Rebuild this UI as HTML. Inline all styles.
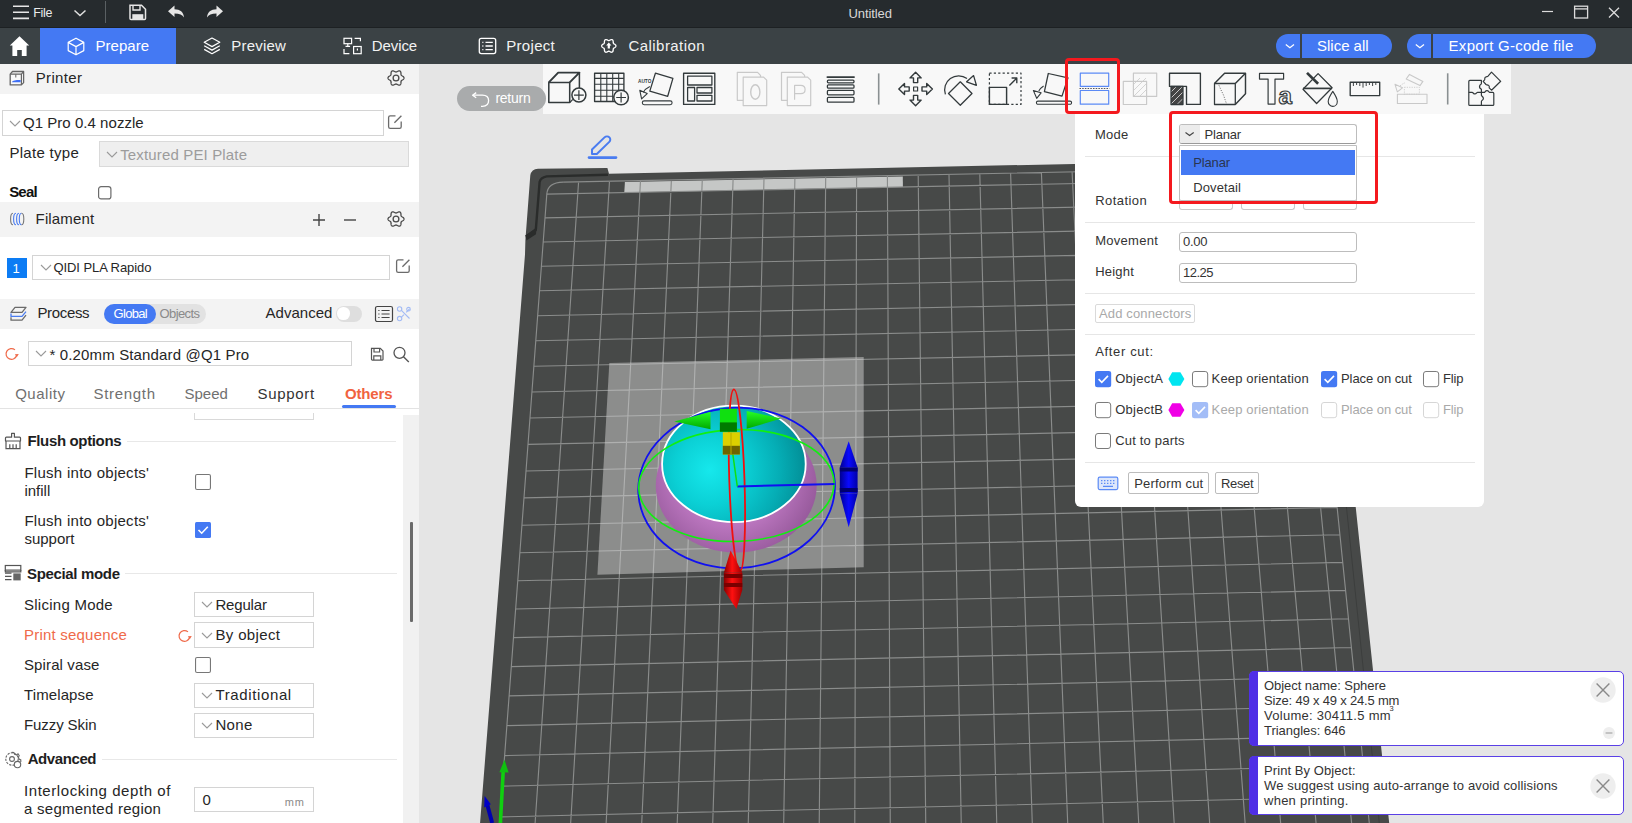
<!DOCTYPE html><html><head><meta charset="utf-8"><style>
html,body{margin:0;padding:0;width:1632px;height:823px;overflow:hidden;background:#e5e5e5;font-family:"Liberation Sans", sans-serif;}
.a{position:absolute;box-sizing:border-box;}
.t{white-space:pre;}
svg.a{overflow:visible;}
</style></head><body>
<svg class="a" style="left:0;top:0" width="1632" height="823" viewBox="0 0 1632 823"><rect x="419" y="64" width="1213" height="759" fill="#e5e5e5"/>
<path d="M474.3,896.1L525.0,254.4L525.4 240L530.3,175.3Q531.5 168.9 538.0,168.7L607.4 167.9L609 173.7L1318.8,158.8L1394.6,874.0Z" fill="#474948"/>
<path d="M608 174.8L546.7 176.4Q540.5 177.5 539.6 182L535.8 230L526 236.5" fill="none" stroke="#2a2c2b" stroke-width="2.4" stroke-linejoin="round"/>
<path d="M525.4 235.6L536.5 227.6L536 234.2L526.5 240.6Z" fill="#2a2c2b"/>
<polygon points="624.9,182.0 902.8,176.5 902.9,187.0 624.3,192.6" fill="#c5c7c6"/>
<path d="M546.8,194.1L496.5,863.8M578.6,181.7L532.4,863.0M609.5,181.1L568.3,862.1M640.5,180.5L604.1,861.3M671.4,179.9L640.0,860.4M702.3,179.3L675.8,859.6M733.1,178.7L711.6,858.7M764.0,178.0L747.4,857.9M794.9,177.4L783.1,857.0M825.7,176.8L818.9,856.2M856.6,176.2L854.7,855.3M887.4,175.6L890.4,854.4M918.2,175.0L926.1,853.6M949.0,174.4L961.8,852.7M979.8,173.7L997.5,851.9M1010.6,173.1L1033.2,851.1M1041.4,172.5L1068.8,850.2M1072.1,171.9L1104.5,849.4M1102.9,171.3L1140.1,848.5M1133.6,170.7L1175.7,847.7M1164.3,170.1L1211.3,846.8M1195.1,169.5L1246.9,846.0M1225.8,168.8L1282.5,845.1M1256.5,168.2L1318.0,844.3M1287.2,167.6L1353.6,843.4M1303.7,179.0L1371.3,843.0M546.8,194.1L1303.7,179.0M545.0,217.9L1306.1,202.6M543.2,242.0L1308.5,226.4M541.4,266.3L1311.0,250.6M539.5,290.8L1313.5,274.9M537.7,315.7L1316.0,299.6M535.8,340.8L1318.5,324.5M533.9,366.3L1321.1,349.8M531.9,392.0L1323.7,375.3M530.0,418.0L1326.3,401.1M528.0,444.4L1329.0,427.2M526.0,471.0L1331.7,453.6M524.0,497.9L1334.4,480.3M521.9,525.2L1337.2,507.4M519.9,552.8L1339.9,534.7M517.8,580.7L1342.8,562.4M515.7,609.0L1345.6,590.4M513.5,637.6L1348.5,618.8M511.3,666.6L1351.4,647.5M509.1,695.9L1354.4,676.6M506.9,725.6L1357.4,706.0M504.7,755.6L1360.4,735.8M502.4,786.1L1363.5,765.9M500.1,816.9L1366.6,796.5M497.7,848.1L1369.8,827.4M563.1,182.1L1302.5,167.3" stroke="#8a8c8b" stroke-width="1.15" fill="none"/>
<path d="M546.8,194.1Q547.7,182.4 563.1,182.1" stroke="#8a8c8b" stroke-width="1.15" fill="none"/>
<polygon points="609.3,363.1 863.7,357.0 863.7,567.2 597.4,574.7" fill="#d8d8d8" fill-opacity="0.48"/>
<path d="M1310.9,164.8L1384.6,874.3" stroke="#3c3e3d" stroke-width="1" fill="none"/>
<defs>
<radialGradient id="gc" cx="710" cy="470" r="100" gradientUnits="userSpaceOnUse">
<stop offset="0" stop-color="#16e8ec"/><stop offset="0.35" stop-color="#0bd0d5"/><stop offset="0.7" stop-color="#05adb5"/><stop offset="1" stop-color="#028a92"/></radialGradient>
<radialGradient id="gp" cx="730" cy="470" r="100" gradientUnits="userSpaceOnUse">
<stop offset="0.55" stop-color="#bb76bf"/><stop offset="1" stop-color="#8e5393"/></radialGradient>
<linearGradient id="gr" x1="0" y1="0" x2="1" y2="0"><stop offset="0" stop-color="#8a0000"/><stop offset="0.45" stop-color="#ff1010"/><stop offset="1" stop-color="#a00000"/></linearGradient>
<linearGradient id="gb" x1="0" y1="0" x2="1" y2="0"><stop offset="0" stop-color="#000090"/><stop offset="0.5" stop-color="#0a0aff"/><stop offset="1" stop-color="#0000a8"/></linearGradient>
<linearGradient id="gg" x1="0" y1="0" x2="0" y2="1"><stop offset="0" stop-color="#26ff26"/><stop offset="1" stop-color="#00a800"/></linearGradient>
</defs>
<ellipse cx="736.2" cy="485.5" rx="80.5" ry="67" fill="url(#gp)"/>
<ellipse cx="733.9" cy="463.9" rx="71.8" ry="58.2" fill="url(#gc)" stroke="#ffffff" stroke-width="1.8"/>
<ellipse cx="736.6" cy="487.9" rx="98.4" ry="80.2" transform="rotate(-3.5 736.6 487.9)" fill="none" stroke="#1010f0" stroke-width="1.8"/>
<ellipse cx="736.4" cy="485.5" rx="97.7" ry="55.9" transform="rotate(-1.8 736.4 485.5)" fill="none" stroke="#10f010" stroke-width="1.6"/>
<ellipse cx="736.9" cy="480.3" rx="7.6" ry="91" transform="rotate(-1.9 736.9 480.3)" fill="none" stroke="#f01010" stroke-width="1.8"/>
<path d="M737.3 486.4L834.5 484" stroke="#1010f0" stroke-width="2"/>
<path d="M737.3 486.4L732.5 452" stroke="#10e010" stroke-width="1.5"/>
<path d="M674.2 421.5L710.5 411.7L710.5 429.2Z" fill="url(#gg)"/>
<path d="M781.2 418.5L746.7 411L746.7 428.8Z" fill="url(#gg)"/>
<rect x="719.9" y="408.8" width="17" height="22.9" fill="#10e010"/><rect x="719.9" y="422.4" width="17" height="9.3" fill="#007a00"/>
<rect x="722.8" y="432.2" width="17.1" height="22.3" fill="#ddd000"/><rect x="722.8" y="445.8" width="17.1" height="8.7" fill="#6e6400"/><path d="M731 432.5V454.4" stroke="#b8aa00" stroke-width="1"/>
<path d="M848.7 441.2L857.6 467.5H839.8Z" fill="url(#gb)"/><rect x="839.8" y="467.5" width="17.8" height="26.2" fill="url(#gb)"/><path d="M839.8 493.7H857.6L848.7 527.3Z" fill="url(#gb)"/><rect x="839.8" y="467.5" width="17.8" height="4" fill="#000070"/><rect x="839.8" y="488" width="17.8" height="4" fill="#000070"/>
<path d="M730.6 550.6L742.3 572.5H723.9Z" fill="url(#gr)"/><rect x="723.9" y="572.5" width="18.4" height="17.5" fill="url(#gr)"/><path d="M723.9 590H742.3L736.4 609Z" fill="url(#gr)"/><rect x="723.9" y="574" width="18.4" height="4" fill="#7a0000"/><rect x="723.9" y="583" width="18.4" height="4" fill="#7a0000"/>
<path d="M503.2 771L500.4 823" stroke="#10d010" stroke-width="3.6"/><path d="M504.5 759.7L508.6 772.6L499.4 772.2Z" fill="#10c010"/>
<path d="M486.8 803L492.2 823" stroke="#0000b0" stroke-width="4"/><path d="M484.6 796L490.8 804.2L484.2 807.6Z" fill="#0000c8"/></svg>
<div class="a" style="left:0.00px;top:0.00px;width:1632.00px;height:27.00px;background:#262b2e"></div>
<div class="a" style="left:0.00px;top:27.00px;width:1632.00px;height:1.00px;background:#1d2123"></div>
<svg class="a" style="left:0px;top:0px;" width="40" height="27" viewBox="0 0 40 27"><path d="M13 6.2H29M13 12.3H29M13 18.4H29" stroke="#e6e6e6" stroke-width="1.6"/></svg>
<div class="a t" style="left:33.20px;top:3.67px;font-size:12.5px;line-height:18px;color:#ececec;font-weight:400;letter-spacing:-0.319px;">File</div>
<svg class="a" style="left:70px;top:0px;" width="20" height="27" viewBox="0 0 20 27"><path d="M4.5 10.5L10 15.5L15.5 10.5" stroke="#e0e0e0" stroke-width="1.5" fill="none"/></svg>
<div class="a" style="left:105.00px;top:1.00px;width:1.20px;height:22.00px;background:#5a6063"></div>
<svg class="a" style="left:125px;top:0px;" width="25" height="27" viewBox="0 0 25 27"><path d="M5 5.2H16.5L20.5 9.2V18.6a1 1 0 0 1-1 1H6a1 1 0 0 1-1-1Z" stroke="#e6e6e6" stroke-width="1.5" fill="none"/><path d="M8 5.5V10H15V5.5" stroke="#e6e6e6" stroke-width="1.4" fill="none"/><rect x="7.3" y="14.2" width="11" height="4.8" fill="#e6e6e6"/></svg>
<svg class="a" style="left:165px;top:0px;" width="24" height="27" viewBox="0 0 24 27"><path d="M3 11.3L9.5 5.6V9.2C15 9.2 18.7 12 19 17.6C17.5 14.8 14.5 13.4 9.5 13.4V17Z" fill="#e6e6e6"/></svg>
<svg class="a" style="left:203px;top:0px;" width="24" height="27" viewBox="0 0 24 27"><path d="M20 11.3L13.5 5.6V9.2C8 9.2 4.3 12 4 17.6C5.5 14.8 8.5 13.4 13.5 13.4V17Z" fill="#e6e6e6"/></svg>
<div class="a t" style="left:848.50px;top:4.50px;font-size:13px;line-height:18px;color:#d8d8d8;font-weight:400;letter-spacing:-0.085px;">Untitled</div>
<svg class="a" style="left:1530px;top:0px;" width="102" height="27" viewBox="0 0 102 27"><path d="M12 11.5H23" stroke="#dcdcdc" stroke-width="1.2"/><rect x="44.6" y="6.2" width="13" height="11.8" stroke="#dcdcdc" stroke-width="1.3" fill="none"/><path d="M44.6 8.9H57.6" stroke="#dcdcdc" stroke-width="1.3"/><path d="M79 7.8L89 17.5M89 7.8L79 17.5" stroke="#dcdcdc" stroke-width="1.3"/></svg>
<div class="a" style="left:0.00px;top:28.00px;width:1632.00px;height:36.00px;background:#3b4245"></div>
<div class="a" style="left:40.00px;top:28.00px;width:136.00px;height:36.00px;background:#4479f3"></div>
<svg class="a" style="left:0px;top:28px;" width="40" height="36" viewBox="0 0 40 36"><path d="M19.5 8.2L29.2 17.6H26.6V28H21.8V22H17.2V28H12.4V17.6H9.8Z" fill="#ffffff"/></svg>
<svg class="a" style="left:60px;top:28px;" width="30" height="36" viewBox="0 0 30 36"><path d="M16 10.2L23.8 14.4V22.6L16 26.8L8.2 22.6V14.4Z M8.2 14.4L16 18.6L23.8 14.4M16 18.6V26.6" stroke="#fff" stroke-width="1.2" fill="none" stroke-linejoin="round"/></svg>
<div class="a t" style="left:95.60px;top:35.30px;font-size:15px;line-height:21px;color:#ffffff;font-weight:400;letter-spacing:0.004px;">Prepare</div>
<svg class="a" style="left:200px;top:28px;" width="24" height="36" viewBox="0 0 24 36"><path d="M12 10L19.8 14.3L12 18.6L4.2 14.3Z" stroke="#fff" stroke-width="1.2" fill="none" stroke-linejoin="round"/><path d="M4.2 17.8L12 22.1L19.8 17.8M4.2 21.4L12 25.7L19.8 21.4" stroke="#fff" stroke-width="1.2" fill="none" stroke-linejoin="round"/></svg>
<div class="a t" style="left:231.30px;top:35.30px;font-size:15px;line-height:21px;color:#f2f2f2;font-weight:400;letter-spacing:0.193px;">Preview</div>
<svg class="a" style="left:340px;top:28px;" width="24" height="36" viewBox="0 0 24 36"><rect x="4" y="10.3" width="7.6" height="5.4" stroke="#fff" stroke-width="1.2" fill="none"/><path d="M7.8 15.7V18.3M5.5 18.3H10.1" stroke="#fff" stroke-width="1.2"/><path d="M14.6 10.3H20.4V13.2M4 21V25.6H9.4" stroke="#fff" stroke-width="1.2" fill="none"/><rect x="13.6" y="18.5" width="7.6" height="7.2" stroke="#fff" stroke-width="1.2" fill="none"/><path d="M17.4 20.6V22.6" stroke="#fff" stroke-width="1.2"/></svg>
<div class="a t" style="left:371.80px;top:35.30px;font-size:15px;line-height:21px;color:#f2f2f2;font-weight:400;letter-spacing:-0.089px;">Device</div>
<svg class="a" style="left:475px;top:28px;" width="24" height="36" viewBox="0 0 24 36"><rect x="4.3" y="10.4" width="16.4" height="15.2" rx="2" stroke="#fff" stroke-width="1.3" fill="none"/><path d="M7.3 14.4H8.4M10.5 14.4H17.8M7.3 18H8.4M10.5 18H17.8M7.3 21.6H8.4M10.5 21.6H17.8" stroke="#fff" stroke-width="1.3"/></svg>
<div class="a t" style="left:506.20px;top:35.30px;font-size:15px;line-height:21px;color:#f2f2f2;font-weight:400;letter-spacing:0.319px;">Project</div>
<svg class="a" style="left:600px;top:28px;" width="20" height="36" viewBox="0 0 20 36"><path d="M15.90 17.90 L15.85 18.27 L15.69 18.62 L15.45 18.95 L15.14 19.25 L14.79 19.50 L14.43 19.73 L14.09 19.93 L13.80 20.13 L13.56 20.33 L13.39 20.55 L13.28 20.81 L13.23 21.12 L13.21 21.47 L13.20 21.86 L13.18 22.28 L13.13 22.71 L13.03 23.13 L12.87 23.50 L12.64 23.82 L12.35 24.05 L12.00 24.19 L11.62 24.23 L11.21 24.18 L10.80 24.06 L10.40 23.89 L10.03 23.69 L9.69 23.50 L9.37 23.34 L9.08 23.24 L8.80 23.20 L8.52 23.24 L8.23 23.34 L7.91 23.50 L7.57 23.69 L7.20 23.89 L6.80 24.06 L6.39 24.18 L5.98 24.23 L5.60 24.19 L5.25 24.05 L4.96 23.82 L4.73 23.50 L4.57 23.13 L4.47 22.71 L4.42 22.28 L4.40 21.86 L4.39 21.47 L4.37 21.12 L4.32 20.81 L4.21 20.55 L4.04 20.33 L3.80 20.13 L3.51 19.93 L3.17 19.73 L2.81 19.50 L2.46 19.25 L2.15 18.95 L1.91 18.62 L1.75 18.27 L1.70 17.90 L1.75 17.53 L1.91 17.18 L2.15 16.85 L2.46 16.55 L2.81 16.30 L3.17 16.07 L3.51 15.87 L3.80 15.67 L4.04 15.47 L4.21 15.25 L4.32 14.99 L4.37 14.68 L4.39 14.33 L4.40 13.94 L4.42 13.52 L4.47 13.09 L4.57 12.67 L4.73 12.30 L4.96 11.98 L5.25 11.75 L5.60 11.61 L5.98 11.57 L6.39 11.62 L6.80 11.74 L7.20 11.91 L7.57 12.11 L7.91 12.30 L8.23 12.46 L8.52 12.56 L8.80 12.60 L9.08 12.56 L9.37 12.46 L9.69 12.30 L10.03 12.11 L10.40 11.91 L10.80 11.74 L11.21 11.62 L11.62 11.57 L12.00 11.61 L12.35 11.75 L12.64 11.98 L12.87 12.30 L13.03 12.67 L13.13 13.09 L13.18 13.52 L13.20 13.94 L13.21 14.33 L13.23 14.68 L13.28 14.99 L13.39 15.25 L13.56 15.47 L13.80 15.67 L14.09 15.87 L14.43 16.07 L14.79 16.30 L15.14 16.55 L15.45 16.85 L15.69 17.18 L15.85 17.53 L15.90 17.90Z" stroke="#fff" stroke-width="1.3" fill="none"/><path d="M8.8 14.4L11.4 17.4H9.9V20.6H7.7V17.4H6.2Z" fill="#fff"/></svg>
<div class="a t" style="left:628.60px;top:35.30px;font-size:15px;line-height:21px;color:#f2f2f2;font-weight:400;letter-spacing:0.420px;">Calibration</div>
<div class="a" style="left:1276.00px;top:34.00px;width:116.00px;height:24.00px;background:#4479f3;border-radius:12px"></div>
<div class="a" style="left:1300.00px;top:34.00px;width:2.00px;height:24.00px;background:#3b4245"></div>
<svg class="a" style="left:1280px;top:34px;" width="20" height="24" viewBox="0 0 20 24"><path d="M5.8 10.6L9.9 13.8L14 10.6" stroke="#fff" stroke-width="1.3" fill="none"/></svg>
<div class="a t" style="left:1317.10px;top:35.30px;font-size:15px;line-height:21px;color:#ffffff;font-weight:400;letter-spacing:-0.034px;">Slice all</div>
<div class="a" style="left:1407.00px;top:34.00px;width:189.00px;height:24.00px;background:#4479f3;border-radius:12px"></div>
<div class="a" style="left:1430.80px;top:34.00px;width:2.00px;height:24.00px;background:#3b4245"></div>
<svg class="a" style="left:1410px;top:34px;" width="20" height="24" viewBox="0 0 20 24"><path d="M5.8 10.6L9.9 13.8L14 10.6" stroke="#fff" stroke-width="1.3" fill="none"/></svg>
<div class="a t" style="left:1448.60px;top:35.30px;font-size:15px;line-height:21px;color:#ffffff;font-weight:400;letter-spacing:0.272px;">Export G-code file</div>
<div class="a" style="left:0.00px;top:64.00px;width:419.00px;height:759.00px;background:#ffffff"></div>
<div class="a" style="left:0.00px;top:64.00px;width:419.00px;height:30.00px;background:#f3f3f3"></div>
<svg class="a" style="left:8px;top:69px;" width="18" height="18" viewBox="0 0 18 18"><path d="M2.2 5.2L4.5 2.5H15.6V13.6L13.4 15.9H2.2Z" stroke="#666" stroke-width="1.3" fill="#fafafa" stroke-linejoin="round"/><path d="M2.2 5.2H13.4V15.9M13.4 5.2L15.6 2.5" stroke="#666" stroke-width="1.2" fill="none"/><path d="M7.8 5.3V8.5" stroke="#666" stroke-width="1"/><path d="M3.8 13.2C5 11.4 7 11 12.6 11V13.2Z" fill="#3f6ff5"/></svg>
<div class="a t" style="left:35.70px;top:67.30px;font-size:15px;line-height:21px;color:#262626;font-weight:400;letter-spacing:0.352px;">Printer</div>
<svg class="a" style="left:388px;top:70px;" width="16" height="16" viewBox="0 0 16 16"><path d="M16.00 8.00 L15.94 8.42 L15.77 8.82 L15.49 9.19 L15.15 9.52 L14.76 9.81 L14.36 10.07 L13.99 10.30 L13.66 10.52 L13.39 10.75 L13.20 11.00 L13.07 11.29 L13.01 11.64 L12.98 12.04 L12.97 12.48 L12.95 12.95 L12.89 13.43 L12.78 13.90 L12.59 14.32 L12.33 14.67 L12.00 14.93 L11.61 15.08 L11.18 15.13 L10.72 15.08 L10.26 14.95 L9.81 14.76 L9.39 14.54 L9.00 14.33 L8.65 14.16 L8.32 14.04 L8.00 14.00 L7.68 14.04 L7.35 14.16 L7.00 14.33 L6.61 14.54 L6.19 14.76 L5.74 14.95 L5.28 15.08 L4.82 15.13 L4.39 15.08 L4.00 14.93 L3.67 14.67 L3.41 14.32 L3.22 13.90 L3.11 13.43 L3.05 12.95 L3.03 12.48 L3.02 12.04 L2.99 11.64 L2.93 11.29 L2.80 11.00 L2.61 10.75 L2.34 10.52 L2.01 10.30 L1.64 10.07 L1.24 9.81 L0.85 9.52 L0.51 9.19 L0.23 8.82 L0.06 8.42 L0.00 8.00 L0.06 7.58 L0.23 7.18 L0.51 6.81 L0.85 6.48 L1.24 6.19 L1.64 5.93 L2.01 5.70 L2.34 5.48 L2.61 5.25 L2.80 5.00 L2.93 4.71 L2.99 4.36 L3.02 3.96 L3.03 3.52 L3.05 3.05 L3.11 2.57 L3.22 2.10 L3.41 1.68 L3.67 1.33 L4.00 1.07 L4.39 0.92 L4.82 0.87 L5.28 0.92 L5.74 1.05 L6.19 1.24 L6.61 1.46 L7.00 1.67 L7.35 1.84 L7.68 1.96 L8.00 2.00 L8.32 1.96 L8.65 1.84 L9.00 1.67 L9.39 1.46 L9.81 1.24 L10.26 1.05 L10.72 0.92 L11.18 0.87 L11.61 0.92 L12.00 1.07 L12.33 1.33 L12.59 1.68 L12.78 2.10 L12.89 2.57 L12.95 3.05 L12.97 3.52 L12.98 3.96 L13.01 4.36 L13.07 4.71 L13.20 5.00 L13.39 5.25 L13.66 5.48 L13.99 5.70 L14.36 5.93 L14.76 6.19 L15.15 6.48 L15.49 6.81 L15.77 7.18 L15.94 7.58 L16.00 8.00Z" stroke="#4a4a4a" stroke-width="1.3" fill="none" stroke-linejoin="round"/><circle cx="8.0" cy="8.0" r="2.88" stroke="#4a4a4a" stroke-width="1.3" fill="none"/></svg>
<div class="a" style="left:2.00px;top:110.00px;width:381.50px;height:26.00px;background:#fff;border:1px solid #d4d4d4"></div>
<svg class="a" style="left:9px;top:119.5px;" width="12" height="7" viewBox="0 0 12 7"><path d="M1 1L6.0 6L11 1" stroke="#9a9a9a" stroke-width="1.1" fill="none"/></svg>
<div class="a t" style="left:23.00px;top:112.30px;font-size:15px;line-height:21px;color:#262626;font-weight:400;letter-spacing:0.038px;">Q1 Pro 0.4 nozzle</div>
<svg class="a" style="left:386px;top:113px;" width="18" height="18" viewBox="0 0 18 18"><path d="M9.5 2.8H4.2a1.6 1.6 0 0 0-1.6 1.6V13.8a1.6 1.6 0 0 0 1.6 1.6H13.6a1.6 1.6 0 0 0 1.6-1.6V8.6" stroke="#6b6b6b" stroke-width="1.3" fill="none"/><path d="M8.4 9.8L15.4 2.8" stroke="#6b6b6b" stroke-width="1.3"/></svg>
<div class="a t" style="left:9.40px;top:142.30px;font-size:15px;line-height:21px;color:#262626;font-weight:400;letter-spacing:0.298px;">Plate type</div>
<div class="a" style="left:99.00px;top:141.40px;width:309.60px;height:25.50px;background:#efefef;border:1px solid #dadada"></div>
<svg class="a" style="left:106px;top:150.65px;" width="12" height="7" viewBox="0 0 12 7"><path d="M1 1L6.0 6L11 1" stroke="#9a9a9a" stroke-width="1.1" fill="none"/></svg>
<div class="a t" style="left:120.20px;top:144.30px;font-size:15px;line-height:21px;color:#9c9c9c;font-weight:400;letter-spacing:0.150px;">Textured PEI Plate</div>
<div class="a t" style="left:9.20px;top:181.30px;font-size:15px;line-height:21px;color:#111;font-weight:700;letter-spacing:-0.820px;">Seal</div>
<svg class="a" style="left:98px;top:186px;" width="13.5" height="13.5" viewBox="0 0 13.5 13.5"><rect x="0.6" y="0.6" width="12.3" height="12.3" rx="2.5" fill="#fff" stroke="#6b6b6b" stroke-width="1.2"/></svg>
<div class="a" style="left:0.00px;top:202.00px;width:419.00px;height:35.00px;background:#f3f3f3"></div>
<svg class="a" style="left:8px;top:210px;" width="18" height="18" viewBox="0 0 18 18"><path d="M5 3.2C3.4 3.2 2.6 6 2.6 9C2.6 12 3.4 14.8 5 14.8" stroke="#777" stroke-width="1.1" fill="none"/><path d="M8 3.2C6.4 3.2 5.6 6 5.6 9C5.6 12 6.4 14.8 8 14.8M11 3.2C9.4 3.2 8.6 6 8.6 9C8.6 12 9.4 14.8 11 14.8M13.5 3.2C12 3.2 11.3 6 11.3 9C11.3 12 12 14.8 13.5 14.8" stroke="#4a7cf0" stroke-width="1.1" fill="none"/><path d="M13.5 3.2C15 3.2 15.8 6 15.8 9C15.8 12 15 14.8 13.5 14.8" stroke="#777" stroke-width="1.1" fill="none"/></svg>
<div class="a t" style="left:35.60px;top:208.30px;font-size:15px;line-height:21px;color:#262626;font-weight:400;letter-spacing:0.141px;">Filament</div>
<svg class="a" style="left:310px;top:211px;" width="18" height="18" viewBox="0 0 18 18"><path d="M9 3V15M3 9H15" stroke="#444" stroke-width="1.4"/></svg>
<svg class="a" style="left:341px;top:211px;" width="18" height="18" viewBox="0 0 18 18"><path d="M3 9H15" stroke="#444" stroke-width="1.4"/></svg>
<svg class="a" style="left:388px;top:211px;" width="16" height="16" viewBox="0 0 16 16"><path d="M16.00 8.00 L15.94 8.42 L15.77 8.82 L15.49 9.19 L15.15 9.52 L14.76 9.81 L14.36 10.07 L13.99 10.30 L13.66 10.52 L13.39 10.75 L13.20 11.00 L13.07 11.29 L13.01 11.64 L12.98 12.04 L12.97 12.48 L12.95 12.95 L12.89 13.43 L12.78 13.90 L12.59 14.32 L12.33 14.67 L12.00 14.93 L11.61 15.08 L11.18 15.13 L10.72 15.08 L10.26 14.95 L9.81 14.76 L9.39 14.54 L9.00 14.33 L8.65 14.16 L8.32 14.04 L8.00 14.00 L7.68 14.04 L7.35 14.16 L7.00 14.33 L6.61 14.54 L6.19 14.76 L5.74 14.95 L5.28 15.08 L4.82 15.13 L4.39 15.08 L4.00 14.93 L3.67 14.67 L3.41 14.32 L3.22 13.90 L3.11 13.43 L3.05 12.95 L3.03 12.48 L3.02 12.04 L2.99 11.64 L2.93 11.29 L2.80 11.00 L2.61 10.75 L2.34 10.52 L2.01 10.30 L1.64 10.07 L1.24 9.81 L0.85 9.52 L0.51 9.19 L0.23 8.82 L0.06 8.42 L0.00 8.00 L0.06 7.58 L0.23 7.18 L0.51 6.81 L0.85 6.48 L1.24 6.19 L1.64 5.93 L2.01 5.70 L2.34 5.48 L2.61 5.25 L2.80 5.00 L2.93 4.71 L2.99 4.36 L3.02 3.96 L3.03 3.52 L3.05 3.05 L3.11 2.57 L3.22 2.10 L3.41 1.68 L3.67 1.33 L4.00 1.07 L4.39 0.92 L4.82 0.87 L5.28 0.92 L5.74 1.05 L6.19 1.24 L6.61 1.46 L7.00 1.67 L7.35 1.84 L7.68 1.96 L8.00 2.00 L8.32 1.96 L8.65 1.84 L9.00 1.67 L9.39 1.46 L9.81 1.24 L10.26 1.05 L10.72 0.92 L11.18 0.87 L11.61 0.92 L12.00 1.07 L12.33 1.33 L12.59 1.68 L12.78 2.10 L12.89 2.57 L12.95 3.05 L12.97 3.52 L12.98 3.96 L13.01 4.36 L13.07 4.71 L13.20 5.00 L13.39 5.25 L13.66 5.48 L13.99 5.70 L14.36 5.93 L14.76 6.19 L15.15 6.48 L15.49 6.81 L15.77 7.18 L15.94 7.58 L16.00 8.00Z" stroke="#4a4a4a" stroke-width="1.3" fill="none" stroke-linejoin="round"/><circle cx="8.0" cy="8.0" r="2.88" stroke="#4a4a4a" stroke-width="1.3" fill="none"/></svg>
<div class="a" style="left:7.00px;top:258.00px;width:19.70px;height:19.50px;background:#0c7cf4"></div>
<div class="a t" style="left:12.60px;top:259.50px;font-size:13px;line-height:18px;color:#fff;font-weight:400;">1</div>
<div class="a" style="left:32.40px;top:255.30px;width:357.20px;height:25.00px;background:#fff;border:1px solid #d4d4d4"></div>
<svg class="a" style="left:40px;top:264.3px;" width="12" height="7" viewBox="0 0 12 7"><path d="M1 1L6.0 6L11 1" stroke="#9a9a9a" stroke-width="1.1" fill="none"/></svg>
<div class="a t" style="left:53.50px;top:258.50px;font-size:13px;line-height:18px;color:#262626;font-weight:400;letter-spacing:-0.080px;">QIDI PLA Rapido</div>
<svg class="a" style="left:394px;top:257px;" width="18" height="18" viewBox="0 0 18 18"><path d="M9.5 2.8H4.2a1.6 1.6 0 0 0-1.6 1.6V13.8a1.6 1.6 0 0 0 1.6 1.6H13.6a1.6 1.6 0 0 0 1.6-1.6V8.6" stroke="#6b6b6b" stroke-width="1.3" fill="none"/><path d="M8.4 9.8L15.4 2.8" stroke="#6b6b6b" stroke-width="1.3"/></svg>
<div class="a" style="left:0.00px;top:299.00px;width:419.00px;height:29.50px;background:#f3f3f3"></div>
<svg class="a" style="left:0px;top:300px;" width="30" height="26" viewBox="0 0 30 26"><path d="M11 12.4L15 7.4H26L22 12.4Z" stroke="#6a6a6a" stroke-width="1.3" fill="none" stroke-linejoin="round"/><path d="M11 13.6V16.4H22L26 11.6" stroke="#4a7cf0" stroke-width="1.3" fill="none" stroke-linejoin="round"/><path d="M11 17.2V20.2H22L26 15.2" stroke="#6a6a6a" stroke-width="1.3" fill="none" stroke-linejoin="round"/></svg>
<div class="a t" style="left:37.40px;top:302.30px;font-size:15px;line-height:21px;color:#262626;font-weight:400;letter-spacing:-0.331px;">Process</div>
<div class="a" style="left:103.70px;top:303.50px;width:102.70px;height:20.80px;background:#e2e2e2;border-radius:10.4px"></div>
<div class="a" style="left:103.70px;top:303.50px;width:52.70px;height:20.80px;background:#4479f3;border-radius:10.4px"></div>
<div class="a t" style="left:113.60px;top:304.50px;font-size:13px;line-height:18px;color:#fff;font-weight:400;letter-spacing:-0.719px;">Global</div>
<div class="a t" style="left:159.60px;top:304.50px;font-size:13px;line-height:18px;color:#8a8a8a;font-weight:400;letter-spacing:-0.613px;">Objects</div>
<div class="a t" style="left:265.50px;top:302.30px;font-size:15px;line-height:21px;color:#262626;font-weight:400;letter-spacing:0.026px;">Advanced</div>
<div class="a" style="left:335.60px;top:305.60px;width:26.70px;height:16.10px;background:#dedede;border-radius:8px"></div>
<div class="a" style="left:337.30px;top:307.30px;width:12.70px;height:12.70px;background:#fff;border-radius:50%"></div>
<svg class="a" style="left:374px;top:305px;" width="20" height="18" viewBox="0 0 20 18"><rect x="1.5" y="1.5" width="17" height="15" rx="1.8" stroke="#444" stroke-width="1.2" fill="none"/><path d="M4.3 5.5H5.5M7.5 5.5H15.6M4.3 9H5.5M7.5 9H15.6M4.3 12.5H5.5M7.5 12.5H15.6" stroke="#444" stroke-width="1.2"/></svg>
<svg class="a" style="left:396px;top:305px;" width="16" height="18" viewBox="0 0 16 18"><circle cx="3.6" cy="4" r="2.2" stroke="#a3bbf5" stroke-width="1.1" fill="none"/><circle cx="3.6" cy="13.6" r="2.2" stroke="#a3bbf5" stroke-width="1.1" fill="none"/><path d="M5.4 5.4L13.5 13.5M5.4 12.2L8 9.6M10.2 7.4L13.5 4" stroke="#a3bbf5" stroke-width="1.1"/><circle cx="12.5" cy="4.2" r="1.8" stroke="#a3bbf5" stroke-width="1.1" fill="none"/></svg>
<svg class="a" style="left:4px;top:346px;" width="16" height="16" viewBox="0 0 16 16"><path d="M10.97 3.86A5.4 5.4 0 1 0 12.7 9.2" stroke="#ef6a4a" stroke-width="1.25" fill="none"/><path d="M10.9 8.2L14.8 8L12.8 11.3Z" fill="#ef6a4a"/></svg>
<div class="a" style="left:28.30px;top:341.20px;width:324.10px;height:25.20px;background:#fff;border:1px solid #d4d4d4"></div>
<svg class="a" style="left:35px;top:350.3px;" width="12" height="7" viewBox="0 0 12 7"><path d="M1 1L6.0 6L11 1" stroke="#9a9a9a" stroke-width="1.1" fill="none"/></svg>
<div class="a t" style="left:49.50px;top:344.30px;font-size:15px;line-height:21px;color:#262626;font-weight:400;letter-spacing:0.145px;">* 0.20mm Standard @Q1 Pro</div>
<svg class="a" style="left:369px;top:346px;" width="16" height="16" viewBox="0 0 16 16"><path d="M2.5 2.3H11.3L14 5V13.2a.9.9 0 0 1-.9.9H3.4a.9.9 0 0 1-.9-.9Z" stroke="#555" stroke-width="1.2" fill="none"/><path d="M5 2.5V6H10.6V2.5M4.8 14V9.8H11.8V14" stroke="#555" stroke-width="1.2" fill="none"/></svg>
<svg class="a" style="left:392px;top:345px;" width="19" height="19" viewBox="0 0 19 19"><circle cx="7.5" cy="7.8" r="5.5" stroke="#555" stroke-width="1.3" fill="none"/><path d="M11.5 11.8L16.8 17" stroke="#555" stroke-width="1.4"/></svg>
<div class="a t" style="left:15.20px;top:383.30px;font-size:15px;line-height:21px;color:#707070;font-weight:400;letter-spacing:0.519px;">Quality</div>
<div class="a t" style="left:93.60px;top:383.30px;font-size:15px;line-height:21px;color:#707070;font-weight:400;letter-spacing:0.669px;">Strength</div>
<div class="a t" style="left:184.50px;top:383.30px;font-size:15px;line-height:21px;color:#707070;font-weight:400;letter-spacing:-0.019px;">Speed</div>
<div class="a t" style="left:257.50px;top:383.30px;font-size:15px;line-height:21px;color:#333;font-weight:400;letter-spacing:0.692px;">Support</div>
<div class="a t" style="left:345.00px;top:383.30px;font-size:15px;line-height:21px;color:#f1633f;font-weight:700;letter-spacing:-0.172px;">Others</div>
<div class="a" style="left:342.00px;top:405.00px;width:53.70px;height:3.00px;background:#4479f3;border-radius:1.5px"></div>
<div class="a" style="left:0.00px;top:408.00px;width:419.00px;height:1.00px;background:#e3e3e3"></div>
<div class="a" style="left:194.40px;top:413.00px;width:119.60px;height:7.00px;border:1px solid #d9d9d9;border-top:none"></div>
<div class="a" style="left:403.00px;top:415.00px;width:16.00px;height:408.00px;background:#f1f1f1"></div>
<div class="a" style="left:410.00px;top:522.00px;width:2.50px;height:100.00px;background:#6a6a6a;border-radius:1px"></div>
<svg class="a" style="left:3px;top:431px;" width="20" height="20" viewBox="0 0 20 20"><path d="M8.6 2.4H11.4V6.2H16.6a.9.9 0 0 1 .9.9V10H2.5V7.1a.9.9 0 0 1 .9-.9H8.6Z" stroke="#555" stroke-width="1.2" fill="none" stroke-linejoin="round"/><path d="M3 10V17.6H17V10M6.8 13.3V17.6M10 13.3V17.6M13.2 13.3V17.6" stroke="#555" stroke-width="1.2" fill="none"/></svg>
<div class="a t" style="left:27.50px;top:430.30px;font-size:15px;line-height:21px;color:#1e1e1e;font-weight:700;letter-spacing:-0.358px;">Flush options</div>
<div class="a" style="left:127.40px;top:441.00px;width:269.00px;height:1.00px;background:#e8e8e8"></div>
<div class="a t" style="left:24.40px;top:462.30px;font-size:15px;line-height:21px;color:#262626;font-weight:400;letter-spacing:0.278px;">Flush into objects&#x27;</div>
<div class="a t" style="left:24.40px;top:480.30px;font-size:15px;line-height:21px;color:#262626;font-weight:400;">infill</div>
<svg class="a" style="left:195px;top:474.3px;" width="16" height="16" viewBox="0 0 16 16"><rect x="0.55" y="0.55" width="14.9" height="14.9" rx="1.5" fill="#fff" stroke="#777" stroke-width="1.1"/></svg>
<div class="a t" style="left:24.40px;top:510.30px;font-size:15px;line-height:21px;color:#262626;font-weight:400;letter-spacing:0.278px;">Flush into objects&#x27;</div>
<div class="a t" style="left:24.40px;top:528.30px;font-size:15px;line-height:21px;color:#262626;font-weight:400;">support</div>
<svg class="a" style="left:195px;top:522.2px;" width="16" height="16" viewBox="0 0 16 16"><rect x="0" y="0" width="16" height="16" rx="1.5" fill="#4479f3"/><path d="M3.5 8.0L6.7 11.2L12.8 4.8" stroke="#fff" stroke-width="1.6" fill="none"/></svg>
<svg class="a" style="left:3px;top:563px;" width="20" height="20" viewBox="0 0 20 20"><rect x="2.3" y="2.5" width="15.5" height="4.6" stroke="#555" stroke-width="1.2" fill="none"/><path d="M2 10.2H8.5M2 13.4H8.5M2 16.6H8.5" stroke="#555" stroke-width="1.2"/><rect x="10.3" y="10.4" width="7.4" height="7" fill="#666"/><path d="M2.3 7.1V8.8H17.8V7.1" stroke="#555" stroke-width="1.2" fill="none"/></svg>
<div class="a t" style="left:27.00px;top:563.30px;font-size:15px;line-height:21px;color:#1e1e1e;font-weight:700;letter-spacing:-0.337px;">Special mode</div>
<div class="a" style="left:124.80px;top:572.50px;width:272.00px;height:1.00px;background:#e8e8e8"></div>
<div class="a t" style="left:24.00px;top:594.30px;font-size:15px;line-height:21px;color:#262626;font-weight:400;letter-spacing:0.257px;">Slicing Mode</div>
<div class="a" style="left:194.20px;top:592.20px;width:119.60px;height:25.20px;background:#fff;border:1px solid #d4d4d4"></div>
<svg class="a" style="left:201px;top:601.3000000000001px;" width="12" height="7" viewBox="0 0 12 7"><path d="M1 1L6.0 6L11 1" stroke="#9a9a9a" stroke-width="1.1" fill="none"/></svg>
<div class="a t" style="left:215.40px;top:594.30px;font-size:15px;line-height:21px;color:#262626;font-weight:400;letter-spacing:-0.172px;">Regular</div>
<div class="a t" style="left:24.00px;top:624.30px;font-size:15px;line-height:21px;color:#ef6a4a;font-weight:400;letter-spacing:0.209px;">Print sequence</div>
<div class="a" style="left:194.20px;top:622.40px;width:119.60px;height:25.20px;background:#fff;border:1px solid #d4d4d4"></div>
<svg class="a" style="left:201px;top:631.5px;" width="12" height="7" viewBox="0 0 12 7"><path d="M1 1L6.0 6L11 1" stroke="#9a9a9a" stroke-width="1.1" fill="none"/></svg>
<div class="a t" style="left:215.40px;top:624.30px;font-size:15px;line-height:21px;color:#262626;font-weight:400;letter-spacing:0.362px;">By object</div>
<div class="a t" style="left:24.00px;top:684.30px;font-size:15px;line-height:21px;color:#262626;font-weight:400;letter-spacing:0.109px;">Timelapse</div>
<div class="a" style="left:194.20px;top:682.50px;width:119.60px;height:25.20px;background:#fff;border:1px solid #d4d4d4"></div>
<svg class="a" style="left:201px;top:691.6px;" width="12" height="7" viewBox="0 0 12 7"><path d="M1 1L6.0 6L11 1" stroke="#9a9a9a" stroke-width="1.1" fill="none"/></svg>
<div class="a t" style="left:215.40px;top:684.30px;font-size:15px;line-height:21px;color:#262626;font-weight:400;letter-spacing:0.633px;">Traditional</div>
<div class="a t" style="left:24.00px;top:714.30px;font-size:15px;line-height:21px;color:#262626;font-weight:400;letter-spacing:-0.094px;">Fuzzy Skin</div>
<div class="a" style="left:194.20px;top:712.50px;width:119.60px;height:25.20px;background:#fff;border:1px solid #d4d4d4"></div>
<svg class="a" style="left:201px;top:721.6px;" width="12" height="7" viewBox="0 0 12 7"><path d="M1 1L6.0 6L11 1" stroke="#9a9a9a" stroke-width="1.1" fill="none"/></svg>
<div class="a t" style="left:215.40px;top:714.30px;font-size:15px;line-height:21px;color:#262626;font-weight:400;letter-spacing:0.380px;">None</div>
<svg class="a" style="left:177px;top:627.5px;" width="16" height="16" viewBox="0 0 16 16"><path d="M10.97 3.86A5.4 5.4 0 1 0 12.7 9.2" stroke="#ef6a4a" stroke-width="1.25" fill="none"/><path d="M10.9 8.2L14.8 8L12.8 11.3Z" fill="#ef6a4a"/></svg>
<div class="a t" style="left:24.00px;top:654.30px;font-size:15px;line-height:21px;color:#262626;font-weight:400;letter-spacing:0.120px;">Spiral vase</div>
<svg class="a" style="left:195px;top:657.4px;" width="16" height="16" viewBox="0 0 16 16"><rect x="0.55" y="0.55" width="14.9" height="14.9" rx="1.5" fill="#fff" stroke="#777" stroke-width="1.1"/></svg>
<svg class="a" style="left:3px;top:750px;" width="20" height="20" viewBox="0 0 20 20"><path d="M8.7 2.2L10.8 2.6L11.6 4.4L13.6 4.9L15 3.8L16.2 5.5L15.4 7.2L16 9L17.8 9.9V12" stroke="#666" stroke-width="1.1" fill="none"/><circle cx="9" cy="9" r="6.2" stroke="#666" stroke-width="1.1" fill="none" stroke-dasharray="2.2 1.2"/><circle cx="9" cy="9" r="2.4" stroke="#666" stroke-width="1.1" fill="none"/><circle cx="14.5" cy="14.6" r="3.2" stroke="#666" stroke-width="1.1" fill="#fff"/></svg>
<div class="a t" style="left:27.70px;top:748.30px;font-size:15px;line-height:21px;color:#1e1e1e;font-weight:700;letter-spacing:-0.410px;">Advanced</div>
<div class="a" style="left:102.00px;top:759.00px;width:294.50px;height:1.00px;background:#e8e8e8"></div>
<div class="a t" style="left:24.00px;top:780.30px;font-size:15px;line-height:21px;color:#262626;font-weight:400;letter-spacing:0.564px;">Interlocking depth of</div>
<div class="a t" style="left:24.00px;top:798.30px;font-size:15px;line-height:21px;color:#262626;font-weight:400;letter-spacing:0.257px;">a segmented region</div>
<div class="a" style="left:194.20px;top:787.00px;width:119.60px;height:25.40px;background:#fff;border:1px solid #d4d4d4"></div>
<div class="a t" style="left:202.60px;top:789.30px;font-size:15px;line-height:21px;color:#262626;font-weight:400;">0</div>
<div class="a t" style="left:284.70px;top:794.69px;font-size:11px;line-height:15px;color:#8a8a8a;font-weight:400;letter-spacing:0.988px;">mm</div>
<div class="a" style="left:542.60px;top:64.00px;width:968.00px;height:50.00px;background:#f8f8f8"></div>
<div class="a" style="left:457.00px;top:86.00px;width:89.00px;height:25.40px;background:#a9abac;border-radius:12.7px"></div>
<svg class="a" style="left:457px;top:86px;" width="40" height="26" viewBox="0 0 40 26"><path d="M19.2 6.6L15.6 9.2L19.2 11.8" stroke="#fff" stroke-width="1.3" fill="none" stroke-linejoin="round"/><path d="M15.8 9.2H25.4C29.6 9.2 31.6 11.6 31.6 14.6C31.6 17.8 29.6 20.4 25.4 20.4H24" stroke="#fff" stroke-width="1.3" fill="none"/></svg>
<div class="a t" style="left:495.40px;top:88.15px;font-size:14px;line-height:20px;color:#ffffff;font-weight:400;letter-spacing:-0.249px;">return</div>
<svg class="a" style="left:585px;top:130px;top:130px" width="34" height="28" viewBox="0 0 34 28"><path d="M7 19.5L19.5 7.4C21 6 23.2 6.2 24.4 7.4C25.6 8.6 25.6 10.6 24.3 11.9L11.8 24H7Z" stroke="#4a7cf0" stroke-width="2" fill="none" stroke-linejoin="round"/><path d="M4 27.6H31" stroke="#4a7cf0" stroke-width="2.6" stroke-linecap="round"/></svg>
<svg class="a" style="left:0;top:0" width="1632" height="823" viewBox="0 0 1632 823"><path d="M548.8 82.4H569.7V102.6H548.8Z" stroke="#333a3c" stroke-width="1.53" fill="none" stroke-linejoin="round" /><path d="M548.8 82.4L558.2 72.6H579.4L569.7 82.4" stroke="#333a3c" stroke-width="1.95" fill="none" stroke-linejoin="round" /><path d="M579.4 72.6V88" stroke="#333a3c" stroke-width="1.53" fill="none" stroke-linejoin="round" /><path d="M569.7 102.6L572.8 99.4" stroke="#333a3c" stroke-width="1.27" fill="none" stroke-linejoin="round" /><circle cx="578.9" cy="95.1" r="7" stroke="#333a3c" stroke-width="1.5" fill="#f8f8f8"/><path d="M578.9 90.2V100M574 95.1H583.8" stroke="#333a3c" stroke-width="1.19" fill="none" stroke-linejoin="round" /><path d="M594.6 73.3H623.9V101.5H594.6Z" stroke="#333a3c" stroke-width="1.36" fill="none" stroke-linejoin="round" /><path d="M600.8 73.3V101.5M606.8 73.3V101.5M612.7 73.3V101.5M618.7 73.3V101.5M594.6 78.4H623.9M594.6 84.3H623.9M594.6 90.3H623.9M594.6 96.3H623.9" stroke="#333a3c" stroke-width="1.1" fill="none" stroke-linejoin="round" /><circle cx="621.1" cy="97.5" r="7.3" stroke="#333a3c" stroke-width="1.5" fill="#f8f8f8"/><path d="M621.1 92.6V102.4M616.2 97.5H626" stroke="#333a3c" stroke-width="1.19" fill="none" stroke-linejoin="round" /><text x="638" y="82.9" font-size="5.6" font-weight="700" fill="#333a3c" font-family="Liberation Sans" textLength="13.4" lengthAdjust="spacingAndGlyphs">AUTO</text><path d="M655.4 73.2L672.9 78.4L667.7 96.3L649.8 91.1Z" stroke="#333a3c" stroke-width="1.27" fill="none" stroke-linejoin="round" /><path d="M649.8 86.4C646.5 88 644.4 90 643.2 92.4" stroke="#333a3c" stroke-width="1.1" fill="none" stroke-linejoin="round" /><path d="M639.8 90.3L647.2 93.6L641.6 98.8Z" stroke="#333a3c" stroke-width="1.1" fill="none" stroke-linejoin="round" /><path d="M644.2 100.9H670.2a1.9 1.9 0 0 1 0 3.8H644.2a1.9 1.9 0 0 1 0-3.8Z" stroke="#333a3c" stroke-width="1.1" fill="none" stroke-linejoin="round" /><path d="M683.6 73.2H714.8V104.4H683.6Z" stroke="#333a3c" stroke-width="1.36" fill="none" stroke-linejoin="round" /><path d="M687.6 76.2H711.9V85H687.6ZM687.6 87.5H694.6V101H687.6ZM697 87.5H711.9V93H697ZM697 95.3H711.9V101H697Z" stroke="#333a3c" stroke-width="1.27" fill="none" stroke-linejoin="round" /><path d="M743.2 100.3H737.3V72.3H757.6L760.5 75.3V77.1" stroke="#c9c9c9" stroke-width="1.19" fill="none" stroke-linejoin="round" /><path d="M743.2 77.1H763.6L766.7 80.2V105.6H743.2Z" stroke="#c9c9c9" stroke-width="1.19" fill="none" stroke-linejoin="round" /><ellipse cx="755.3" cy="92" rx="4.6" ry="7.3" stroke="#c9c9c9" stroke-width="1.4" fill="none"/><path d="M787.3 100.3H781.5V72.3H801.6L804.6 75.3V77.1" stroke="#c9c9c9" stroke-width="1.19" fill="none" stroke-linejoin="round" /><path d="M787.3 77.1H807.6L810.7 80.2V105.6H787.3Z" stroke="#c9c9c9" stroke-width="1.19" fill="none" stroke-linejoin="round" /><path d="M794.6 99.8V85.4H800.8C803.6 85.4 805.1 87.2 805.1 89.6C805.1 92 803.6 93.7 800.8 93.7H794.6" stroke="#c9c9c9" stroke-width="1.19" fill="none" stroke-linejoin="round" /><path d="M827.4 77.1H854" stroke="#333a3c" stroke-width="1.87" fill="none" stroke-linejoin="round" stroke-linecap="round"/><path d="M828.4 80.2H853a1 1 0 0 1 1 1V81.8a1 1 0 0 1-1 1H828.4a1 1 0 0 1-1-1V81.2a1 1 0 0 1 1-1Z" stroke="#333a3c" stroke-width="1.27" fill="none" stroke-linejoin="round" /><path d="M828.4 84.8H853a1 1 0 0 1 1 1V87.2a1 1 0 0 1-1 1H828.4a1 1 0 0 1-1-1V85.8a1 1 0 0 1 1-1Z" stroke="#333a3c" stroke-width="1.27" fill="none" stroke-linejoin="round" /><path d="M828.4 90.4H853a1 1 0 0 1 1 1V93.8a1 1 0 0 1-1 1H828.4a1 1 0 0 1-1-1V91.4a1 1 0 0 1 1-1Z" stroke="#333a3c" stroke-width="1.27" fill="none" stroke-linejoin="round" /><path d="M828.4 97.3H853a1 1 0 0 1 1 1V101.2a1 1 0 0 1-1 1H828.4a1 1 0 0 1-1-1V98.3a1 1 0 0 1 1-1Z" stroke="#333a3c" stroke-width="1.27" fill="none" stroke-linejoin="round" /><path d="M878.7 73.4V104.6" stroke="#8a9092" stroke-width="1.6"/><path transform="translate(915.6 89) rotate(0)" d="M0 -16.8L5.6 -11.1H2.1V-6.4H-2.1V-11.1H-5.6Z" stroke="#333a3c" stroke-width="1.4" fill="none" stroke-linejoin="round"/><path transform="translate(915.6 89) rotate(90)" d="M0 -16.8L5.6 -11.1H2.1V-6.4H-2.1V-11.1H-5.6Z" stroke="#333a3c" stroke-width="1.4" fill="none" stroke-linejoin="round"/><path transform="translate(915.6 89) rotate(180)" d="M0 -16.8L5.6 -11.1H2.1V-6.4H-2.1V-11.1H-5.6Z" stroke="#333a3c" stroke-width="1.4" fill="none" stroke-linejoin="round"/><path transform="translate(915.6 89) rotate(270)" d="M0 -16.8L5.6 -11.1H2.1V-6.4H-2.1V-11.1H-5.6Z" stroke="#333a3c" stroke-width="1.4" fill="none" stroke-linejoin="round"/><path d="M913.6 87H917.6V91H913.6Z" stroke="#333a3c" stroke-width="1.19" fill="none" stroke-linejoin="round" /><path d="M945.4 94.4A14 14 0 0 1 967 78.6" stroke="#333a3c" stroke-width="1.27" fill="none" stroke-linejoin="round" /><path d="M966.6 81.8L973.6 75.6L976.4 85.3Z" stroke="#333a3c" stroke-width="1.27" fill="none" stroke-linejoin="round" /><path d="M960.3 81.8L972 93.5L960.3 105.3L948.5 93.5Z" stroke="#333a3c" stroke-width="1.27" fill="none" stroke-linejoin="round" /><path d="M989.4 73.1H1021V104.4H989.4Z" stroke="#333a3c" stroke-width="1.19" fill="none" stroke-linejoin="round" stroke-dasharray="2.2 2.2"/><path d="M989.4 87.4H1006.6V104.4H989.4Z" stroke="#333a3c" stroke-width="1.44" fill="none" stroke-linejoin="round" /><path d="M1009.4 85.4L1016.4 78.4M1011.6 78H1016.8V83.2" stroke="#333a3c" stroke-width="1.36" fill="none" stroke-linejoin="round" /><path d="M1048.3 73.5L1068 77.8L1062 96.1L1044.4 91.7Z" stroke="#333a3c" stroke-width="1.27" fill="none" stroke-linejoin="round" /><path d="M1043.6 86C1041.4 87.4 1039.8 88.9 1038.8 91" stroke="#333a3c" stroke-width="1.1" fill="none" stroke-linejoin="round" /><path d="M1033.4 90.6L1041.1 92.8L1036.7 98.3Z" stroke="#333a3c" stroke-width="1.1" fill="none" stroke-linejoin="round" /><path d="M1038 101.1H1070a1.6 1.6 0 0 1 0 3.2H1038a1.6 1.6 0 0 1 0-3.2Z" stroke="#333a3c" stroke-width="1.1" fill="none" stroke-linejoin="round" /><path d="M1080.3 73.2H1108.7V86.4H1080.3ZM1080.3 90.5H1108.7V104.2H1080.3Z" stroke="#5b8af5" stroke-width="1.19" fill="none" stroke-linejoin="round" /><path d="M1079.5 88.4H1109.5" stroke="#555" stroke-width="1.02" fill="none" stroke-linejoin="round" stroke-dasharray="1.5 1.2"/><path d="M1133.4 73.2H1156.7V96.4H1133.4Z" stroke="#c9c9c9" stroke-width="1.19" fill="none" stroke-linejoin="round" /><path d="M1123.3 81.4H1146.6V104.5H1123.3Z" stroke="#c9c9c9" stroke-width="1.19" fill="none" stroke-linejoin="round" /><path d="M1134 84L1140 78M1134 90L1146 78M1134 96L1146 84M1140 96L1146 90" stroke="#c9c9c9" stroke-width="0.77" fill="none" stroke-linejoin="round" /><path d="M1169.5 73.2H1200.4V104.4H1186.5V86.4H1169.5Z" stroke="#333a3c" stroke-width="1.36" fill="none" stroke-linejoin="round" /><path d="M1171 86.5H1183V104.5H1171Z" fill="#444"/><path d="M1171 92L1176.5 86.5M1171 98L1182.5 86.5M1171 104L1183 92M1177 104.5L1183 98.5" stroke="#e0e0e0" stroke-width="0.85" fill="none" stroke-linejoin="round" /><path d="M1171 86.5H1183V104.5H1171Z" stroke="#333a3c" stroke-width="1.27" fill="none" stroke-linejoin="round" /><path d="M1214.5 83.5H1235.3V104.5H1214.5Z" stroke="#333a3c" stroke-width="1.27" fill="none" stroke-linejoin="round" /><path d="M1214.5 83.5L1224.6 73.2H1245.5L1235.3 83.5M1245.5 73.2V93.8L1235.3 104.5" stroke="#333a3c" stroke-width="1.44" fill="none" stroke-linejoin="round" /><path d="M1219 85.4L1221 90L1223.5 95L1225 99.5L1226.6 104" stroke="#555" stroke-width="0.94" fill="none" stroke-linejoin="round" stroke-dasharray="1 1.5"/><path d="M1259.5 73.4H1283.6V79.1H1275V104.1H1268.1V79.1H1259.5Z" stroke="#333a3c" stroke-width="1.19" fill="none" stroke-linejoin="round" /><text x="1278.4" y="104.2" font-size="24" fill="#f8f8f8" stroke="#333a3c" stroke-width="1.2" font-family="Liberation Sans" font-weight="700">a</text><path d="M1303 89.2L1318.1 73.6L1332.1 87.8L1316.6 103.5Z" stroke="#333a3c" stroke-width="1.27" fill="none" stroke-linejoin="round" /><path d="M1303 88.4H1332" stroke="#333a3c" stroke-width="1.7" fill="none" stroke-linejoin="round" /><path d="M1307 72.9L1318.1 83.7" stroke="#333a3c" stroke-width="2.72" fill="none" stroke-linejoin="round" /><path d="M1332.8 91.4C1330 95.6 1328.2 99 1328.2 101.4C1328.2 104.2 1330.3 106.4 1332.8 106.4C1335.3 106.4 1337.3 104.2 1337.3 101.4C1337.3 99 1335.6 95.6 1332.8 91.4Z" stroke="#333a3c" stroke-width="1.1" fill="none" stroke-linejoin="round" /><path d="M1350.2 82.3H1379.7V95.6H1350.2Z" stroke="#333a3c" stroke-width="1.36" fill="none" stroke-linejoin="round" /><path d="M1353.4 82.3V86M1356.6 82.3V85M1359.8 82.3V86M1363 82.3V87.6M1366.2 82.3V86M1369.4 82.3V85M1372.6 82.3V86M1375.8 82.3V85" stroke="#333a3c" stroke-width="0.94" fill="none" stroke-linejoin="round" /><path d="M1397.4 94.2H1427V103.5H1397.4Z" stroke="#c9c9c9" stroke-width="1.1" fill="none" stroke-linejoin="round" /><path d="M1404.4 87.3H1419.4V94.2H1404.4Z" stroke="#c9c9c9" stroke-width="0.85" fill="none" stroke-linejoin="round" stroke-dasharray="1.2 1.2"/><path d="M1409.5 74.4L1422.9 81.4L1420 85.6L1406.2 79Z" stroke="#c9c9c9" stroke-width="1.1" fill="none" stroke-linejoin="round" /><path d="M1395 84.3L1402.5 87.8L1397.3 91.9Z" stroke="#c9c9c9" stroke-width="1.02" fill="none" stroke-linejoin="round" /><path d="M1400 86C1401.8 84.4 1403.4 83.4 1405 82.8" stroke="#c9c9c9" stroke-width="0.94" fill="none" stroke-linejoin="round" stroke-dasharray="1.2 1"/><path d="M1447.7 73.3V104.5" stroke="#8a9092" stroke-width="1.6"/><path d="M1468.8 81.4a1 1 0 0 1 1-1H1481.4V83.5C1481.4 84.3 1480 84.6 1479.7 85.6C1479.2 87 1480 88.5 1481.4 89.3V92.4H1477.5C1476.8 92.4 1476.4 94 1474.9 94C1473.4 94 1473 92.4 1472.2 92.4H1468.8Z" stroke="#333a3c" stroke-width="1.19" fill="none" stroke-linejoin="round" /><path d="M1468.8 92.4V104.4a1 1 0 0 0 1 1H1481.4V101.4C1481.4 100.6 1483.4 100 1483.4 98.4C1483.4 96.8 1481.4 96 1481.4 95.2V92.4" stroke="#333a3c" stroke-width="1.19" fill="none" stroke-linejoin="round" /><path d="M1481.4 105.4H1492.8a1 1 0 0 0 1-1V93.4a1 1 0 0 0-1-1H1489.6C1488.8 92.4 1488.8 90.6 1487 90.6C1485.2 90.6 1485 92.4 1484.3 92.4H1481.4" stroke="#333a3c" stroke-width="1.19" fill="none" stroke-linejoin="round" /><path d="M1491.5 72.2L1500.7 81.3L1491.5 90.2L1489.2 87.9C1489.4 87.2 1489.5 86.2 1488.6 85.4C1487.6 84.6 1486.6 85 1486 84.5L1483.2 81.4L1484.6 79.9C1485 79.4 1484.4 78.3 1485.2 77.4C1486 76.5 1487.2 76.7 1488 76.2Z" stroke="#333a3c" stroke-width="1.19" fill="none" stroke-linejoin="round" /></svg>
<div class="a" style="left:1064.60px;top:57.90px;width:55.70px;height:56.00px;border:3px solid #f4191e;border-radius:4px"></div>
<div class="a" style="left:1074.70px;top:114.00px;width:409.50px;height:393.00px;background:#ffffff;border-radius:0 0 6px 6px"></div>
<div class="a t" style="left:1095.00px;top:125.50px;font-size:13px;line-height:18px;color:#333333;font-weight:400;letter-spacing:0.256px;">Mode</div>
<div class="a" style="left:1085.00px;top:155.50px;width:389.70px;height:1.00px;background:#e6e6e6"></div>
<div class="a" style="left:1085.00px;top:221.50px;width:389.70px;height:1.00px;background:#e6e6e6"></div>
<div class="a" style="left:1085.00px;top:293.40px;width:389.70px;height:1.00px;background:#e6e6e6"></div>
<div class="a" style="left:1085.00px;top:334.40px;width:389.70px;height:1.00px;background:#e6e6e6"></div>
<div class="a" style="left:1085.00px;top:462.40px;width:389.70px;height:1.00px;background:#e6e6e6"></div>
<div class="a t" style="left:1095.20px;top:191.50px;font-size:13px;line-height:18px;color:#333333;font-weight:400;letter-spacing:0.452px;">Rotation</div>
<div class="a" style="left:1179.20px;top:195.00px;width:53.50px;height:15.20px;border:1px solid #c9c9c9;border-top:none;border-radius:0 0 3px 3px"></div>
<div class="a" style="left:1241.30px;top:195.00px;width:53.50px;height:15.20px;border:1px solid #c9c9c9;border-top:none;border-radius:0 0 3px 3px"></div>
<div class="a" style="left:1303.40px;top:195.00px;width:53.50px;height:15.20px;border:1px solid #c9c9c9;border-top:none;border-radius:0 0 3px 3px"></div>
<div class="a t" style="left:1095.20px;top:231.50px;font-size:13px;line-height:18px;color:#333333;font-weight:400;letter-spacing:0.271px;">Movement</div>
<div class="a" style="left:1179.20px;top:231.60px;width:177.70px;height:20.00px;border:1px solid #bdbdbd;border-radius:3px;background:#fff"></div>
<div class="a t" style="left:1183.00px;top:232.50px;font-size:13px;line-height:18px;color:#333333;font-weight:400;letter-spacing:-0.271px;">0.00</div>
<div class="a t" style="left:1095.20px;top:262.50px;font-size:13px;line-height:18px;color:#333333;font-weight:400;letter-spacing:0.201px;">Height</div>
<div class="a" style="left:1179.20px;top:262.50px;width:177.70px;height:20.00px;border:1px solid #bdbdbd;border-radius:3px;background:#fff"></div>
<div class="a t" style="left:1183.00px;top:263.50px;font-size:13px;line-height:18px;color:#333333;font-weight:400;letter-spacing:-0.487px;">12.25</div>
<div class="a" style="left:1095.20px;top:303.50px;width:100.20px;height:19.60px;border:1px solid #dadada;border-radius:2px"></div>
<div class="a t" style="left:1099.00px;top:304.50px;font-size:13px;line-height:18px;color:#a9a9a9;font-weight:400;letter-spacing:0.149px;">Add connectors</div>
<div class="a t" style="left:1095.20px;top:342.50px;font-size:13px;line-height:18px;color:#333333;font-weight:400;letter-spacing:0.654px;">After cut:</div>
<svg class="a" style="left:1095.2px;top:371.3px;" width="16.2" height="16.2" viewBox="0 0 16.2 16.2"><rect x="0" y="0" width="16.2" height="16.2" rx="2.5" fill="#4479f3"/><path d="M3.6 8.1L6.8 11.3L13.0 4.9" stroke="#fff" stroke-width="1.6" fill="none"/></svg>
<div class="a t" style="left:1115.20px;top:369.50px;font-size:13px;line-height:18px;color:#333333;font-weight:400;letter-spacing:0.258px;">ObjectA</div>
<svg class="a" style="left:1168px;top:371.3px;" width="17" height="16" viewBox="0 0 17 16"><path d="M4.2 1.2H12.4L16.4 8L12.4 14.8H4.2L0.4 8Z" fill="#00e5f0"/></svg>
<svg class="a" style="left:1191.6px;top:371.3px;" width="16.2" height="16.2" viewBox="0 0 16.2 16.2"><rect x="0.5" y="0.5" width="15.2" height="15.2" rx="2.5" fill="#fff" stroke="#7a7a7a" stroke-width="1"/></svg>
<div class="a t" style="left:1211.60px;top:369.50px;font-size:13px;line-height:18px;color:#333333;font-weight:400;letter-spacing:0.159px;">Keep orientation</div>
<svg class="a" style="left:1321.1px;top:371.3px;" width="16.2" height="16.2" viewBox="0 0 16.2 16.2"><rect x="0" y="0" width="16.2" height="16.2" rx="2.5" fill="#4479f3"/><path d="M3.6 8.1L6.8 11.3L13.0 4.9" stroke="#fff" stroke-width="1.6" fill="none"/></svg>
<div class="a t" style="left:1341.00px;top:369.50px;font-size:13px;line-height:18px;color:#333333;font-weight:400;letter-spacing:-0.060px;">Place on cut</div>
<svg class="a" style="left:1423.2px;top:371.3px;" width="16.2" height="16.2" viewBox="0 0 16.2 16.2"><rect x="0.5" y="0.5" width="15.2" height="15.2" rx="2.5" fill="#fff" stroke="#7a7a7a" stroke-width="1"/></svg>
<div class="a t" style="left:1443.10px;top:369.50px;font-size:13px;line-height:18px;color:#333333;font-weight:400;letter-spacing:-0.184px;">Flip</div>
<svg class="a" style="left:1095.2px;top:402.2px;" width="16.2" height="16.2" viewBox="0 0 16.2 16.2"><rect x="0.5" y="0.5" width="15.2" height="15.2" rx="2.5" fill="#fff" stroke="#7a7a7a" stroke-width="1"/></svg>
<div class="a t" style="left:1115.20px;top:400.50px;font-size:13px;line-height:18px;color:#333333;font-weight:400;letter-spacing:0.258px;">ObjectB</div>
<svg class="a" style="left:1168px;top:402.2px;" width="17" height="16" viewBox="0 0 17 16"><path d="M4.2 1.2H12.4L16.4 8L12.4 14.8H4.2L0.4 8Z" fill="#f000e6"/></svg>
<svg class="a" style="left:1191.6px;top:402.2px;" width="16.2" height="16.2" viewBox="0 0 16.2 16.2"><rect x="0" y="0" width="16.2" height="16.2" rx="2.5" fill="#a3bdf7"/><path d="M3.6 8.1L6.8 11.3L13.0 4.9" stroke="#fff" stroke-width="1.6" fill="none"/></svg>
<div class="a t" style="left:1211.60px;top:400.50px;font-size:13px;line-height:18px;color:#a9a9a9;font-weight:400;letter-spacing:0.159px;">Keep orientation</div>
<svg class="a" style="left:1321.1px;top:402.2px;" width="16.2" height="16.2" viewBox="0 0 16.2 16.2"><rect x="0.5" y="0.5" width="15.2" height="15.2" rx="2.5" fill="#fff" stroke="#d6d6d6" stroke-width="1"/></svg>
<div class="a t" style="left:1341.00px;top:400.50px;font-size:13px;line-height:18px;color:#a9a9a9;font-weight:400;letter-spacing:-0.060px;">Place on cut</div>
<svg class="a" style="left:1423.2px;top:402.2px;" width="16.2" height="16.2" viewBox="0 0 16.2 16.2"><rect x="0.5" y="0.5" width="15.2" height="15.2" rx="2.5" fill="#fff" stroke="#d6d6d6" stroke-width="1"/></svg>
<div class="a t" style="left:1443.10px;top:400.50px;font-size:13px;line-height:18px;color:#a9a9a9;font-weight:400;letter-spacing:-0.184px;">Flip</div>
<svg class="a" style="left:1095.2px;top:433px;" width="16" height="16" viewBox="0 0 16 16"><rect x="0.5" y="0.5" width="15" height="15" rx="2.5" fill="#fff" stroke="#7a7a7a" stroke-width="1"/></svg>
<div class="a t" style="left:1115.20px;top:431.50px;font-size:13px;line-height:18px;color:#333333;font-weight:400;letter-spacing:0.191px;">Cut to parts</div>
<svg class="a" style="left:1097px;top:476px;" width="23" height="16" viewBox="0 0 23 16"><rect x="1.2" y="1.2" width="19.6" height="12.4" rx="1.5" fill="#dde7fb" stroke="#5b8af5" stroke-width="1.2"/><path d="M4 4.6H5.4M7 4.6H8.4M10 4.6H11.4M13 4.6H14.4M16 4.6H17.4M4 7.4H5.4M7 7.4H8.4M10 7.4H11.4M13 7.4H14.4M16 7.4H17.4M6 10.4H16" stroke="#5b8af5" stroke-width="1.3"/></svg>
<div class="a" style="left:1128.40px;top:472.20px;width:80.20px;height:22.20px;border:1px solid #bdbdbd;border-radius:2px;background:#fff"></div>
<div class="a t" style="left:1134.20px;top:474.50px;font-size:13px;line-height:18px;color:#333333;font-weight:400;letter-spacing:0.181px;">Perform cut</div>
<div class="a" style="left:1215.30px;top:472.20px;width:44.10px;height:22.20px;border:1px solid #bdbdbd;border-radius:2px;background:#fff"></div>
<div class="a t" style="left:1221.00px;top:474.50px;font-size:13px;line-height:18px;color:#333333;font-weight:400;letter-spacing:-0.342px;">Reset</div>
<div class="a" style="left:1179.30px;top:124.40px;width:177.40px;height:20.00px;border:1px solid #bdbdbd;border-bottom:1.5px solid #9a9a9a;border-radius:3px;background:#fff"></div>
<div class="a" style="left:1180.30px;top:125.40px;width:19.40px;height:17.60px;background:#ececec;border-radius:2px 0 0 2px"></div>
<svg class="a" style="left:1184px;top:129px;" width="12" height="10" viewBox="0 0 12 10"><path d="M1.5 3.6L5.6 6.4L9.7 3.6" stroke="#444" stroke-width="1.2" fill="none"/></svg>
<div class="a t" style="left:1204.40px;top:125.50px;font-size:13px;line-height:18px;color:#333333;font-weight:400;letter-spacing:-0.159px;">Planar</div>
<div class="a" style="left:1179.30px;top:145.00px;width:177.40px;height:56.20px;border:1px solid #bfbfbf;background:#fff;border-radius:0 0 2px 2px"></div>
<div class="a" style="left:1181.20px;top:150.10px;width:173.80px;height:24.70px;background:#4479f3"></div>
<div class="a t" style="left:1193.30px;top:153.50px;font-size:13px;line-height:18px;color:#2a3550;font-weight:400;letter-spacing:-0.159px;">Planar</div>
<div class="a t" style="left:1193.30px;top:178.50px;font-size:13px;line-height:18px;color:#333333;font-weight:400;letter-spacing:0.102px;">Dovetail</div>
<div class="a" style="left:1169.00px;top:110.70px;width:209.10px;height:93.70px;border:3px solid #f4191e;border-radius:4px"></div>
<div class="a" style="left:1249.10px;top:671.00px;width:374.50px;height:74.80px;background:#fff;border:1.5px solid #5a40e6;border-radius:5px"></div>
<div class="a" style="left:1249.10px;top:671.00px;width:9.00px;height:74.80px;background:#4f2fe6;border-radius:5px 0 0 5px"></div>
<div class="a t" style="left:1264.00px;top:676.50px;font-size:13px;line-height:18px;color:#333;font-weight:400;letter-spacing:-0.049px;">Object name: Sphere</div>
<div class="a t" style="left:1264.00px;top:691.50px;font-size:13px;line-height:18px;color:#333;font-weight:400;letter-spacing:-0.185px;">Size: 49 x 49 x 24.5 mm</div>
<div class="a t" style="left:1264.00px;top:706.50px;font-size:13px;line-height:18px;color:#333;font-weight:400;letter-spacing:0.276px;">Volume: 30411.5 mm</div>
<div class="a t" style="left:1264.00px;top:721.50px;font-size:13px;line-height:18px;color:#333;font-weight:400;letter-spacing:-0.025px;">Triangles: 646</div>
<div class="a t" style="left:1389.60px;top:704.40px;font-size:7.5px;line-height:10px;color:#333;font-weight:400;">3</div>
<svg class="a" style="left:1589.7px;top:677px;" width="26" height="26" viewBox="0 0 26 26"><circle cx="13" cy="13" r="12.7" fill="#eeeeee"/><path d="M6.6 6.6L19.4 19.4M19.4 6.6L6.6 19.4" stroke="#8a8a8a" stroke-width="1.4"/></svg>
<svg class="a" style="left:1602px;top:726px;" width="14" height="14" viewBox="0 0 14 14"><circle cx="7" cy="7" r="6" fill="#eeeeee"/><path d="M3.6 7H10.4" stroke="#b0b0b0" stroke-width="1.4"/></svg>
<div class="a" style="left:1249.10px;top:756.10px;width:374.50px;height:59.30px;background:#fff;border:1.5px solid #5a40e6;border-radius:5px"></div>
<div class="a" style="left:1249.10px;top:756.10px;width:9.00px;height:59.30px;background:#4f2fe6;border-radius:5px 0 0 5px"></div>
<div class="a t" style="left:1264.00px;top:761.50px;font-size:13px;line-height:18px;color:#333;font-weight:400;letter-spacing:0.079px;">Print By Object:</div>
<div class="a t" style="left:1264.00px;top:776.50px;font-size:13px;line-height:18px;color:#333;font-weight:400;letter-spacing:0.143px;">We suggest using auto-arrange to avoid collisions</div>
<div class="a t" style="left:1264.00px;top:791.50px;font-size:13px;line-height:18px;color:#333;font-weight:400;letter-spacing:0.256px;">when printing.</div>
<svg class="a" style="left:1589.7px;top:773.1px;" width="26" height="26" viewBox="0 0 26 26"><circle cx="13" cy="13" r="12.7" fill="#eeeeee"/><path d="M6.6 6.6L19.4 19.4M19.4 6.6L6.6 19.4" stroke="#8a8a8a" stroke-width="1.4"/></svg>
</body></html>
